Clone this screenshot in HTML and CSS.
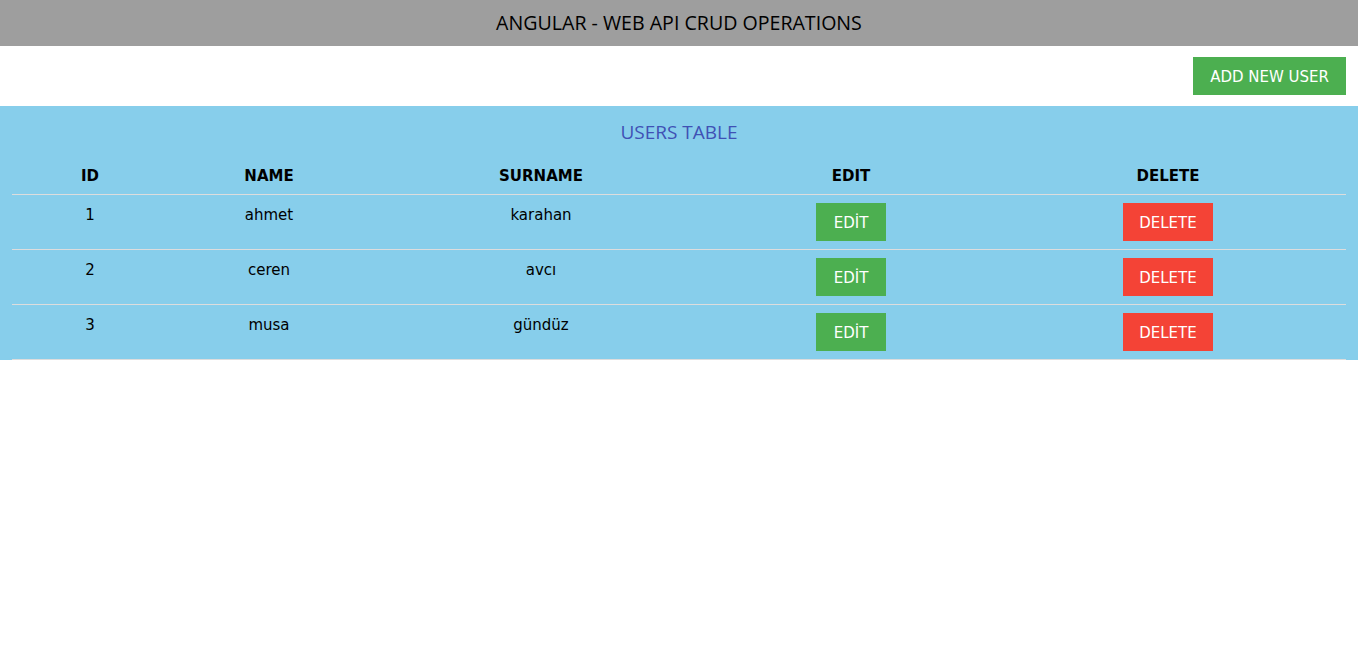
FILE: index.html
```html
<!DOCTYPE html>
<html lang="tr">
<head>
<meta charset="utf-8">
<title>Angular - Web API CRUD Operations</title>
<link rel="stylesheet" href="styles.css">
</head>
<body>
<header class="topbar">ANGULAR - WEB API CRUD OPERATIONS</header>
<div class="actions">
  <button class="btn btn-green btn-wide">ADD NEW USER</button>
</div>
<section class="panel">
  <h2 class="panel-title">USERS TABLE</h2>
  <table class="users">
    <colgroup>
      <col class="c1"><col class="c2"><col class="c3"><col class="c4"><col class="c5">
    </colgroup>
    <thead>
      <tr><th>ID</th><th>NAME</th><th>SURNAME</th><th>EDIT</th><th>DELETE</th></tr>
    </thead>
    <tbody>
      <tr><td>1</td><td>ahmet</td><td>karahan</td><td class="cell-btn"><button class="btn btn-green btn-edit">EDİT</button></td><td class="cell-btn"><button class="btn btn-red">DELETE</button></td></tr>
      <tr><td>2</td><td>ceren</td><td>avcı</td><td class="cell-btn"><button class="btn btn-green btn-edit">EDİT</button></td><td class="cell-btn"><button class="btn btn-red">DELETE</button></td></tr>
      <tr><td>3</td><td>musa</td><td>gündüz</td><td class="cell-btn"><button class="btn btn-green btn-edit">EDİT</button></td><td class="cell-btn"><button class="btn btn-red">DELETE</button></td></tr>
    </tbody>
  </table>
</section>
</body>
</html>
```
FILE: styles.css
```css
html, body {
  margin: 0;
  padding: 0;
  background: #fff;
  font-family: "DejaVu Sans", Verdana, sans-serif;
  font-size: 15px;
  line-height: 1.5;
  color: #000;
}

.topbar {
  height: 46px;
  background: #9e9e9e;
  color: #000;
  font-family: "Open Sans", "Segoe UI", sans-serif;
  font-size: 19.6px;
  line-height: 46px;
  text-align: center;
}

.actions {
  display: flex;
  justify-content: flex-end;
  padding: 11px 12px;
}

.btn {
  border: none;
  margin: 0;
  padding: 9px 16px 7px;
  font-family: "DejaVu Sans", Verdana, sans-serif;
  font-size: 15px;
  line-height: 22px;
  color: #fff;
  cursor: pointer;
  display: inline-block;
  vertical-align: top;
}

.btn-wide { padding-left: 17px; padding-right: 17px; }
.btn-edit { padding-left: 17.5px; padding-right: 17.5px; }

.btn-green { background: #4caf50; }
.btn-red { background: #f44336; }

.panel {
  background: #87ceeb;
  padding: 0 12px;
}

.panel-title {
  margin: 0;
  padding: 11px 0 9px;
  font-family: "Open Sans", "Segoe UI", sans-serif;
  font-weight: normal;
  font-size: 19px;
  line-height: 30px;
  color: #3f51b5;
  text-align: center;
}

.users {
  width: 100%;
  border-collapse: collapse;
  table-layout: fixed;
}

.users .c1 { width: 156px; }
.users .c2 { width: 202px; }
.users .c3 { width: 342px; }
.users .c4 { width: 278px; }
.users .c5 { width: auto; }

.users th,
.users td {
  padding: 9px 8px 7px;
  text-align: center;
  vertical-align: top;
  line-height: 22px;
}

.users td.cell-btn {
  padding: 8px;
}

.users th {
  font-weight: bold;
}

.users tr {
  border-bottom: 1px solid #ddd;
}
```
